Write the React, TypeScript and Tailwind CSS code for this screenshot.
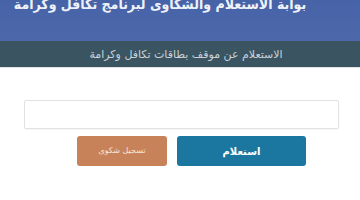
export default function App() {
  return (
    <div dir="rtl" className="w-[360px] h-[200px] overflow-hidden bg-white" style={{ fontFamily: '"DejaVu Sans", sans-serif' }}>
      <div className="h-[41px] bg-gradient-to-b from-[#4763a8] to-[#4d68aa] overflow-hidden flex justify-center pr-[40px]">
        <div className="mt-[-8px] text-[14px] font-bold text-[#eef2f8] leading-[24px] whitespace-nowrap" style={{ fontFamily: '"DejaVu Sans Condensed", "DejaVu Sans", sans-serif' }}>
          بوابة الاستعلام والشكاوى لبرنامج تكافل وكرامة
        </div>
      </div>
      <div className="h-[26px] bg-[#3b5461] flex items-center justify-center pl-[12px]">
        <div className="text-[11px] text-[#c9d2d8] leading-none">الاستعلام عن موقف بطاقات تكافل وكرامة</div>
      </div>
      <div className="h-px bg-[#dfe3e6]" />
      <div className="pt-[32px] flex flex-col">
        <div className="mr-[21px] w-[315px] h-[29px] border border-[#e2e2e2] rounded-[2px] bg-white shadow-[0_1px_1px_rgba(0,0,0,0.04)]" />
        <div className="mt-[7px] mr-[54px] flex gap-[10px]">
          <button className="w-[129px] h-[30px] rounded-[3px] bg-[#1b76a0] text-white text-[10px] font-bold">استعلام</button>
          <button className="w-[90px] h-[30px] rounded-[3px] bg-[#c8825a] text-[#f6e6da] text-[8px]">تسجيل شكوى</button>
        </div>
      </div>
    </div>
  );
}
